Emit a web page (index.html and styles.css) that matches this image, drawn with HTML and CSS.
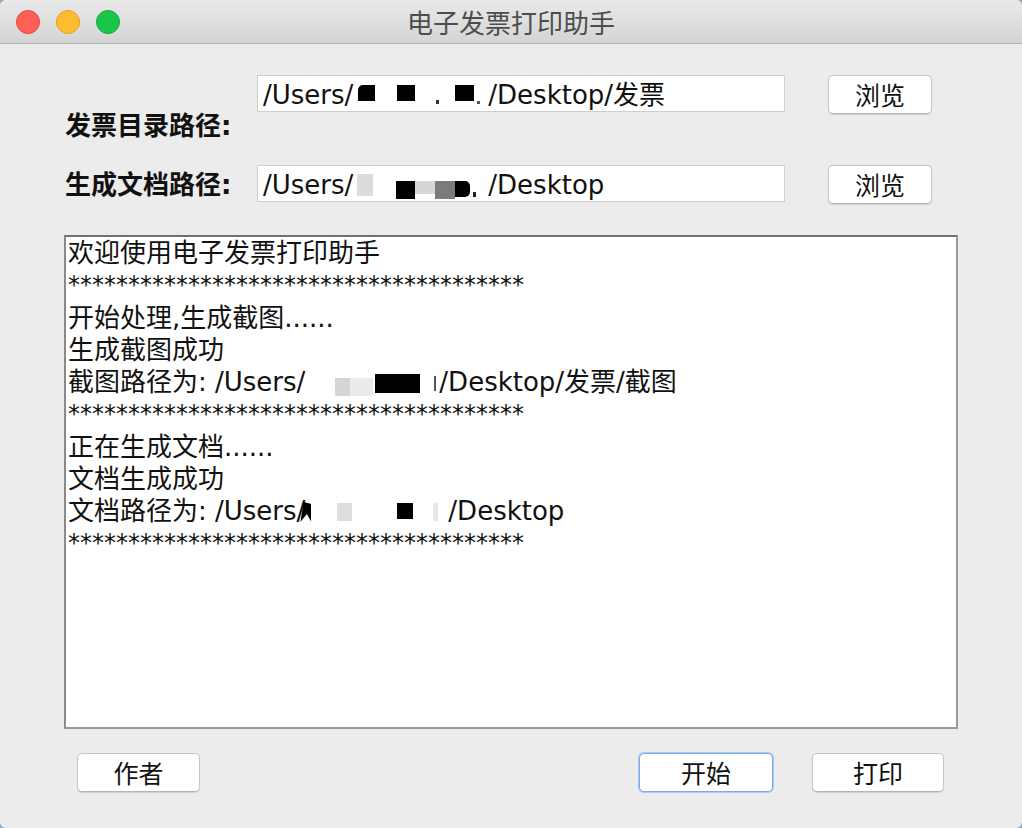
FILE: index.html
```html
<!DOCTYPE html>
<html lang="zh-CN">
<head>
<meta charset="utf-8">
<title>电子发票打印助手</title>
<link rel="stylesheet" href="styles.css">
</head>
<body>
<div class="window">
  <div class="titlebar">
    <div class="lights">
      <span class="light red"></span>
      <span class="light yellow"></span>
      <span class="light green"></span>
    </div>
    <div class="title">电子发票打印助手</div>
    <div></div>
  </div>
  <div class="content">
    <div class="form">
      <div class="lbl lbl1">发票目录路径:</div>
      <div class="field">/Users/<span class="rd f1a"></span><span class="rd f1b"></span><span class="rd f1c"></span><span class="rd f1d"></span><span class="rd f1e"></span>/Desktop/发票</div>
      <button class="btn browse">浏览</button>
      <div class="lbl lbl2">生成文档路径:</div>
      <div class="field">/Users/<span class="rd f2a"></span><span class="rd f2b"></span><span class="rd f2c"></span><span class="rd f2d"></span><span class="rd f2e"></span><span class="rd f2f"></span>/Desktop</div>
      <button class="btn browse">浏览</button>
    </div>
    <div class="log">
      <div class="line">欢迎使用电子发票打印助手</div>
      <div class="line stars">**************************************</div>
      <div class="line">开始处理,生成截图......</div>
      <div class="line">生成截图成功</div>
      <div class="line">截图路径为: /Users/<span class="rd l5a"></span><span class="rd l5b"></span><span class="rd l5c"></span><span class="rd l5d"></span>/Desktop/发票/截图</div>
      <div class="line stars">**************************************</div>
      <div class="line">正在生成文档......</div>
      <div class="line">文档生成成功</div>
      <div class="line">文档路径为: /Users/<span class="rd l9a"></span><span class="rd l9b"></span><span class="rd l9c"></span><span class="rd l9d"></span>/Desktop</div>
      <div class="line stars">**************************************</div>
    </div>
    <div class="actions">
      <button class="btn author">作者</button>
      <button class="btn start">开始</button>
      <button class="btn print">打印</button>
    </div>
  </div>
</div>
</body>
</html>
```
FILE: styles.css
```css
html, body {
  margin: 0;
  padding: 0;
}
body {
  background: #8fa9c0;
  width: 1022px;
  height: 828px;
  overflow: hidden;
  font-family: "DejaVu Sans", "Noto Sans CJK SC", sans-serif;
  color: #111;
}
.window {
  width: 1022px;
  height: 828px;
  background: #ececec;
  border-radius: 6px;
  overflow: hidden;
  display: flex;
  flex-direction: column;
}
.titlebar {
  height: 43px;
  border-bottom: 1px solid #b1b1b1;
  background: linear-gradient(#e9e9e9, #d4d4d4);
  display: grid;
  grid-template-columns: 1fr auto 1fr;
  align-items: center;
}
.lights {
  display: flex;
  gap: 16px;
  padding-left: 16px;
}
.light {
  width: 24px;
  height: 24px;
  border-radius: 50%;
  box-sizing: border-box;
}
.red { background: #fe5f57; border: 1px solid #e1463f; }
.yellow { background: #febc2e; border: 1px solid #dfa125; }
.green { background: #1ac64a; border: 1px solid #14a83c; }
.title {
  font-family: "Noto Sans CJK SC", sans-serif;
  font-size: 26px;
  color: #4d4d4d;
  line-height: 30px;
}
.content {
  padding: 31px 0 0 64px;
}
.form {
  display: grid;
  grid-template-columns: 193px 571px 104px;
  grid-template-rows: 66px 39px;
  row-gap: 24px;
}
.lbl {
  font-size: 26px;
  font-weight: bold;
  line-height: 30px;
  padding-left: 1px;
  white-space: nowrap;
}
.lbl1 { align-self: end; }
.lbl2 { align-self: center; }
.field {
  align-self: start;
  width: 528px;
  height: 37px;
  box-sizing: border-box;
  background: #fff;
  border: 1px solid #cfcfcf;
  padding: 4px 0 0 5px;
  font-size: 26px;
  line-height: 31px;
  white-space: nowrap;
  overflow: hidden;
}
.btn {
  font-family: "Noto Sans CJK SC", sans-serif;
  font-size: 25px;
  color: #111;
  background: #fff;
  border: 1px solid #c6c6c6;
  border-bottom-color: #b4b4b4;
  border-radius: 5px;
  box-shadow: 0 1px 1px rgba(0,0,0,0.12);
  height: 39px;
  padding: 0;
  line-height: 35px;
}
.browse {
  align-self: start;
  width: 104px;
  justify-self: end;
}
.log {
  margin-top: 31px;
  width: 894px;
  height: 494px;
  box-sizing: border-box;
  background: #fff;
  border: 2px solid #999;
  border-top-color: #707070;
  border-left-color: #8a8a8a;
  padding: 0 0 0 2px;
  font-size: 26px;
  line-height: 32.25px;
}
.line {
  white-space: nowrap;
  height: 32.25px;
}
.stars {
  font-size: 24px;
}
.actions {
  width: 894px;
  margin-top: 24px;
  display: flex;
  box-sizing: border-box;
  padding: 0 14px 0 13px;
}
.author { width: 123px; }
.start {
  width: 134px;
  margin-left: auto;
  border: 1px solid #78abe6;
  box-shadow: 0 0 0 1px #a9cbf1;
}
.print {
  width: 132px;
  margin-left: 39px;
}

/* redaction marks */
.rd { display: inline-block; }
.f1a { margin-left: 5px; width: 17px; height: 16px; background: #000; vertical-align: 3px; border-top-left-radius: 5px; }
.f1b { margin-left: 22px; width: 18px; height: 16px; background: #000; vertical-align: 3px; }
.f1c { margin-left: 21px; width: 3px; height: 4px; background: #333; vertical-align: 0; }
.f1d { margin-left: 16px; width: 19px; height: 16px; background: #000; vertical-align: 3px; }
.f1e { margin-left: 3px; margin-right: 8px; width: 3px; height: 3px; background: #555; vertical-align: 0; }

.f2a { margin-left: 4px; width: 16px; height: 22px; background: #dcdcdc; vertical-align: -2px; }
.f2b { margin-left: 23px; width: 19px; height: 18px; background: #000; vertical-align: -5px; }
.f2c { width: 20px; height: 13px; background: #d6d6d6; vertical-align: 0; }
.f2d { width: 20px; height: 18px; background: #7b7b7b; vertical-align: -5px; }
.f2e { width: 15px; height: 16px; background: #000; vertical-align: -3px; border-radius: 0 5px 5px 0; }
.f2f { margin-left: 3px; margin-right: 12px; width: 3px; height: 5px; background: #222; vertical-align: -3px; }

.l5a { margin-left: 30px; width: 15px; height: 18px; background: #d5d5d5; vertical-align: -5px; }
.l5b { width: 23px; height: 18px; background: #ebebeb; vertical-align: -5px; }
.l5c { margin-left: 2px; width: 45px; height: 19px; background: #000; vertical-align: -2px; }
.l5d { margin-left: 14px; margin-right: 3px; width: 2px; height: 15px; background: #555; vertical-align: 0; }

.l9a { margin-left: -5px; width: 11px; height: 20px; background: #000; vertical-align: -2px; clip-path: polygon(0 100%, 30% 0, 100% 10%, 100% 100%, 60% 60%); }
.l9b { margin-left: 26px; width: 15px; height: 18px; background: #dedede; vertical-align: -1px; }
.l9c { margin-left: 45px; width: 16px; height: 16px; background: #000; vertical-align: 1px; }
.l9d { margin-left: 20px; margin-right: 10px; width: 5px; height: 18px; background: #e8e8e8; vertical-align: -1px; }
```
